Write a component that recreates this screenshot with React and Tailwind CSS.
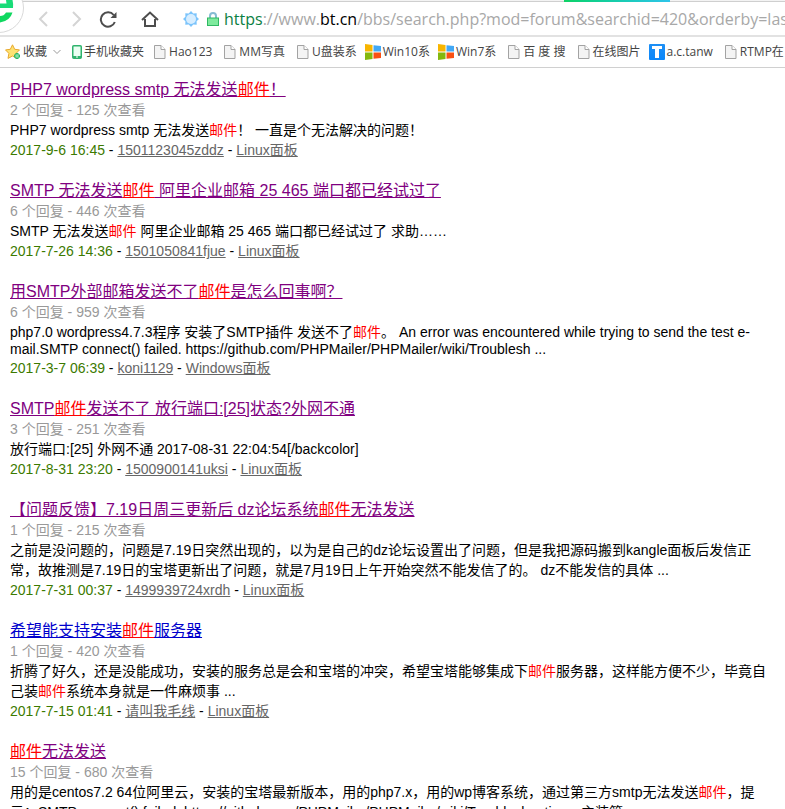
import { Fragment } from "react";

const bookmarks = [
    { title: "Hao123", icon: "page" },
    { title: "MM写真", icon: "page" },
    { title: "U盘装系", icon: "page" },
    { title: "Win10系", icon: "windows" },
    { title: "Win7系", icon: "windows" },
    { title: "百 度 搜", icon: "page" },
    { title: "在线图片", icon: "page" },
    { title: "a.c.tanw", icon: "letter" },
    { title: "RTMP在", icon: "page" },
];

const KEYWORD = "邮件";

const results = [
    {
        id: 1,
        title: "PHP7 wordpress smtp 无法发送邮件！",
        replies: 2,
        views: 125,
        text: "PHP7 wordpress smtp 无法发送邮件！ 一直是个无法解决的问题！",
        date: "2017-9-6 16:45",
        author: "1501123045zddz",
        forum: "Linux面板",
        visited: true,
    },
    {
        id: 2,
        title: "SMTP 无法发送邮件 阿里企业邮箱 25 465 端口都已经试过了",
        replies: 6,
        views: 446,
        text: "SMTP 无法发送邮件 阿里企业邮箱 25 465 端口都已经试过了 求助……",
        date: "2017-7-26 14:36",
        author: "1501050841fjue",
        forum: "Linux面板",
        visited: true,
    },
    {
        id: 3,
        title: "用SMTP外部邮箱发送不了邮件是怎么回事啊？",
        replies: 6,
        views: 959,
        text: "php7.0 wordpress4.7.3程序 安装了SMTP插件 发送不了邮件。 An error was encountered while trying to send the test e-mail.SMTP connect() failed. https://github.com/PHPMailer/PHPMailer/wiki/Troublesh ...",
        date: "2017-3-7 06:39",
        author: "koni1129",
        forum: "Windows面板",
        visited: true,
    },
    {
        id: 4,
        title: "SMTP邮件发送不了 放行端口:[25]状态?外网不通",
        replies: 3,
        views: 251,
        text: "放行端口:[25] 外网不通 2017-08-31 22:04:54[/backcolor]",
        date: "2017-8-31 23:20",
        author: "1500900141uksi",
        forum: "Linux面板",
        visited: true,
    },
    {
        id: 5,
        title: "【问题反馈】7.19日周三更新后 dz论坛系统邮件无法发送",
        replies: 1,
        views: 215,
        text: "之前是没问题的，问题是7.19日突然出现的，以为是自己的dz论坛设置出了问题，但是我把源码搬到kangle面板后发信正常，故推测是7.19日的宝塔更新出了问题，就是7月19日上午开始突然不能发信了的。 dz不能发信的具体 ...",
        date: "2017-7-31 00:37",
        author: "1499939724xrdh",
        forum: "Linux面板",
        visited: true,
    },
    {
        id: 6,
        title: "希望能支持安装邮件服务器",
        replies: 1,
        views: 420,
        text: "折腾了好久，还是没能成功，安装的服务总是会和宝塔的冲突，希望宝塔能够集成下邮件服务器，这样能方便不少，毕竟自己装邮件系统本身就是一件麻烦事 ...",
        date: "2017-7-15 01:41",
        author: "请叫我毛线",
        forum: "Linux面板",
        visited: false,
    },
    {
        id: 7,
        title: "邮件无法发送",
        replies: 15,
        views: 680,
        text: "用的是centos7.2 64位阿里云，安装的宝塔最新版本，用的php7.x，用的wp博客系统，通过第三方smtp无法发送邮件，提示：SMTP connect() failed. https://github.com/PHPMailer/PHPMailer/wiki/Troubleshooting，主装第",
        visited: true,
    },
];

// Paint every occurrence of the keyword red
const Highlight = ({ text, underline }) =>
    text.split(KEYWORD).map((part, i) => (
        <Fragment key={i}>
            {i > 0 && <strong className={underline ? "font-normal text-[#f00] underline" : "font-normal text-[#f00]"}>{KEYWORD}</strong>}
            {part}
        </Fragment>
    ));

const PageIcon = () => (
    <svg className="w-3 h-3.5 shrink-0" viewBox="0 0 12 14" fill="#f4f4f4" stroke="#a3a3a3">
        <path d="M.5 .5h6.500l4 4v9H.5z" />
        <path d="M7 .5v4h4" fill="#fff" />
    </svg>
);

const WindowsIcon = () => (
    <svg className="w-4 h-4 shrink-0" viewBox="0 0 16 16">
        <path d="M0 0l7.500 1v6.500H0z" fill="#f8b500" />
        <path d="M8.500 1.200L16 2v5.500H8.500z" fill="#42a8f5" />
        <path d="M0 8.500h7.500V15L0 16z" fill="#84b80d" />
        <path d="M8.500 8.500H16V14l-7.500 .8z" fill="#fa5012" />
    </svg>
);

const LetterIcon = () => (
    <svg className="w-4 h-4 shrink-0" viewBox="0 0 16 16">
        <defs>
            <linearGradient id="tile" x1="0" y1="0" x2="0" y2="1">
                <stop offset="0" stopColor="#1e90f5" />
                <stop offset="1" stopColor="#0a86fa" />
            </linearGradient>
        </defs>
        <rect width="16" height="16" rx="1" fill="url(#tile)" />
        <rect x="3" y="2" width="10" height="3" fill="#fff" />
        <rect x="6" y="2" width="4" height="12" fill="#fff" />
    </svg>
);

const BookmarkIcon = ({ icon }) => {
    if (icon === "windows") return <WindowsIcon />;
    if (icon === "letter") return <LetterIcon />;
    return <PageIcon />;
};

const BrowserBar = () => (
    <header className="relative font-['Open_Sans','Noto_Sans_CJK_SC',sans-serif]">
        {/* Tab strip edge */}
        <div className="h-0.5 flex bg-[#f3f3f3] border-b border-[#cfcfcf]">
            <div className="w-[564px]" />
            <div className="w-[106px] h-0.5 bg-linear-to-r from-[#0fd264] to-[#2ec4ea]" />
        </div>

        {/* Browser logo */}
        <svg className="absolute left-0 top-0 w-6 h-9" viewBox="0 0 24 36">
            <circle cx="-1" cy="8" r="24.500" fill="#fff" stroke="#d9d9d9" />
            <path d="M0 3.500h6.500L6 0h6.500Q13.500 4 13 8H0z" fill="#18dc78" />
            <path d="M0 16Q4 16 6 12.500h6.500Q10 21 0 22.500z" fill="#10d860" />
        </svg>

        {/* Address row */}
        <div className="h-[35px] pl-9 flex items-center overflow-hidden border-b-2 border-[#e2e2e2]">
            <button aria-label="后退" className="w-4 flex justify-center">
                <svg className="w-4 h-4" viewBox="0 0 16 16" fill="none" stroke="#d4d4d4" strokeWidth="2">
                    <path d="M11 1L4 8l7 7" />
                </svg>
            </button>
            <button aria-label="前进" className="w-4 ml-4 flex justify-center">
                <svg className="w-4 h-4" viewBox="0 0 16 16" fill="none" stroke="#d4d4d4" strokeWidth="2">
                    <path d="M5 1l7 7-7 7" />
                </svg>
            </button>
            <button aria-label="刷新" className="ml-[15px]">
                <svg className="w-[18px] h-[18px]" viewBox="0 0 18 18" fill="none" stroke="#4d4d4d" strokeWidth="2">
                    <path d="M14.700 5A7.200 7.200 0 1 0 15.800 12" />
                    <path d="M17.500 2v6h-6z" fill="#4d4d4d" stroke="none" />
                </svg>
            </button>
            <button aria-label="主页" className="ml-6">
                <svg className="w-[18px] h-[18px]" viewBox="0 0 18 18" fill="none" stroke="#4d4d4d" strokeWidth="2">
                    <path d="M1 10L9 2.500l8 7.500" />
                    <path d="M4 9v7h10V9" />
                </svg>
            </button>
            <div className="w-px h-5 ml-4 bg-[#d4d4d4]" />
            <svg className="w-4 h-4 ml-2 shrink-0" viewBox="0 0 16 16">
                <path d="M8 0l2.300 2.400 3.400-.1-.1 3.400L16 8l-2.400 2.300.1 3.400-3.400-.1L8 16l-2.300-2.400-3.400.1.1-3.400L0 8l2.400-2.300-.1-3.400 3.400.1z" fill="#7cc4fb" />
                <circle cx="8" cy="8" r="5" fill="#d6edff" />
            </svg>
            <svg className="w-3 h-3.5 ml-2 shrink-0" viewBox="0 0 12 14">
                <path d="M3 6V4a3 3 0 0 1 6 0v2" fill="none" stroke="#86bcd3" strokeWidth="2" />
                <rect x=".5" y="6" width="11" height="7.500" fill="#7eea9d" stroke="#2fb863" />
            </svg>
            <p className="ml-[5px] text-base leading-6 whitespace-nowrap text-[#a8a8a8]">
                <span className="text-[#0b8043]">https</span>://www.<span className="text-black">bt.cn</span>
                /bbs/search.php?mod=forum&amp;searchid=420&amp;orderby=last
            </p>
        </div>

        {/* Bookmarks row */}
        <nav className="h-[31px] pl-[5px] flex items-center overflow-hidden whitespace-nowrap text-xs text-[#444] border-b border-[#d0d0d0]">
            <button className="flex items-center">
                <svg className="w-4 h-4 mr-0.5" viewBox="0 0 16 16">
                    <path d="M7.500 .8l2.200 4.500 4.800 .6-3.500 3.500 .9 5-4.400-2.400L3 14.400l.9-5L.5 5.900l4.800-.6z" fill="#fde272" stroke="#e8a92d" />
                    <path d="M12 9v6M9 12h6" stroke="#2db764" strokeWidth="3" />
                    <path d="M12 10v4M10 12h4" stroke="#a6ecbf" />
                </svg>
                收藏
                <svg className="w-2 h-2 ml-1.5" viewBox="0 0 8 8" fill="none" stroke="#999">
                    <path d="M.5 2L4 5.500 7.500 2" />
                </svg>
            </button>
            <a href="#" className="ml-[11px] mr-[10px] flex items-center">
                <svg className="w-2.5 h-3.5 mr-0.5" viewBox="0 0 10 14">
                    <rect x=".75" y=".75" width="8.500" height="12.500" rx="1" fill="#eafff2" stroke="#2fb36d" strokeWidth="1.500" />
                    <path d="M1 11h8v2H1z" fill="#2fb36d" />
                    <path d="M4 12h2" stroke="#fff" />
                </svg>
                手机收藏夹
            </a>
            <ul className="flex items-center">
                {bookmarks.map((item, i) => (
                    <li key={item.title} className={bookmarks[i + 1]?.icon === "page" ? "mr-3" : "mr-2"}>
                        <a href="#" className={item.icon === "page" ? "flex items-center gap-[3px]" : "flex items-center gap-0.5"}>
                            <BookmarkIcon icon={item.icon} />
                            {item.title}
                        </a>
                    </li>
                ))}
            </ul>
        </nav>
    </header>
);

const ResultItem = ({ result }) => (
    <li className="mb-[22px]">
        <h3 className="text-base leading-[19px]">
            <a href="#" className={result.visited ? "underline text-[#800080]" : "underline text-[#0000cc]"}>
                <Highlight text={result.title} underline />
            </a>
        </h3>
        <p className="text-[#999]">
            {result.replies} 个回复 - {result.views} 次查看
        </p>
        <p className="text-black">
            <Highlight text={result.text} />
        </p>
        {result.date && (
            <p className="text-black">
                <span className="text-[#3c7a00]">{result.date}</span> -{" "}
                <a href="#" className="underline text-[#666]">{result.author}</a> -{" "}
                <a href="#" className="underline text-[#666]">{result.forum}</a>
            </p>
        )}
    </li>
);

const App = () => (
    <div className="h-screen flex flex-col overflow-hidden bg-white">
        <BrowserBar />
        <main className="flex-1 min-h-0 overflow-hidden px-2.5 pt-3 text-[14px] leading-[normal] font-['Liberation_Sans','Noto_Sans_CJK_SC',sans-serif]">
            <ul>
                {results.map((result) => (
                    <ResultItem key={result.id} result={result} />
                ))}
            </ul>
        </main>
    </div>
);

export default App;
